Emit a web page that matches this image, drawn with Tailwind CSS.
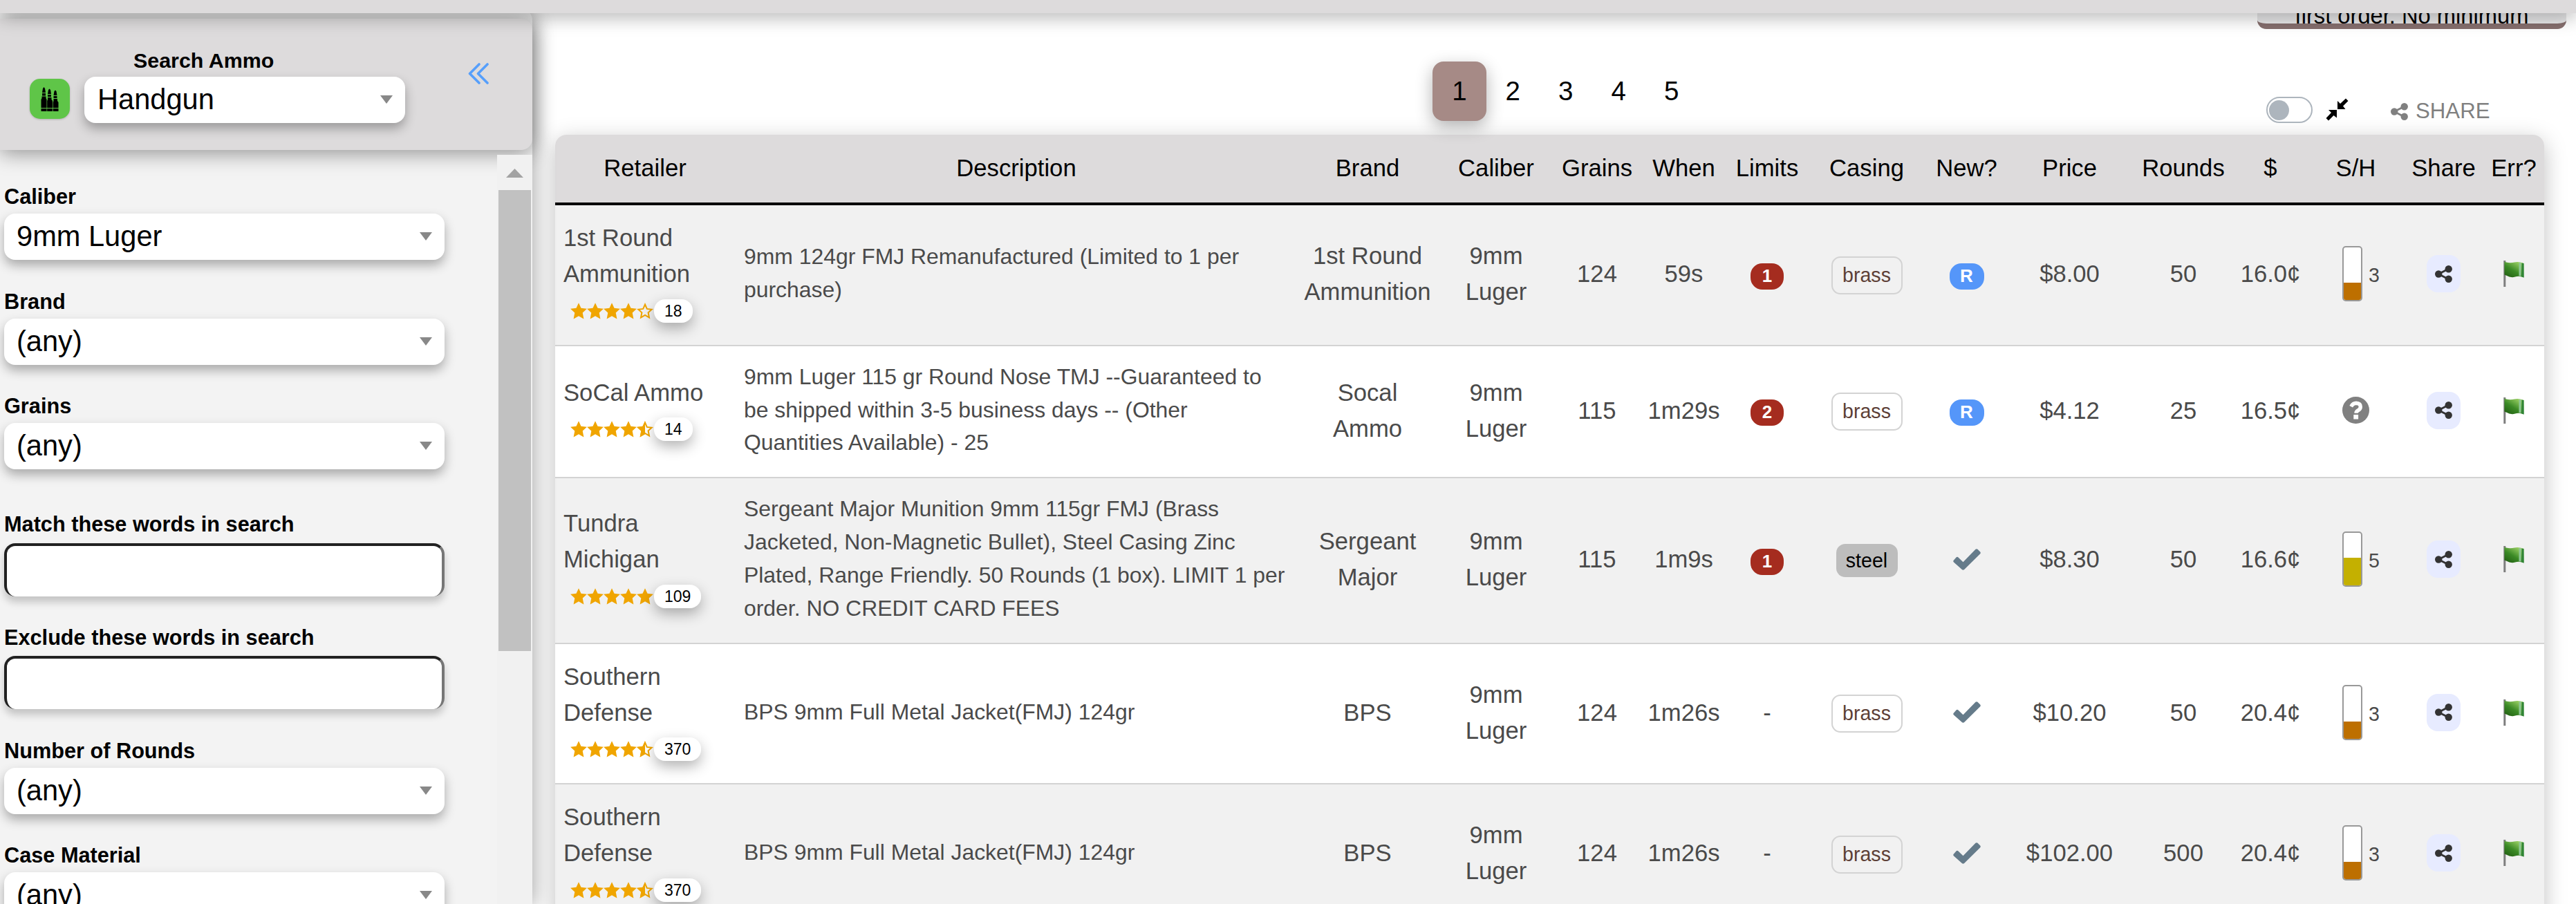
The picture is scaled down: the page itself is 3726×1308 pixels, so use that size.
<!DOCTYPE html>
<html lang="en">
<head>
  <meta charset="UTF-8" />
  <title>Ammo Search</title>
  <script src="https://cdn.jsdelivr.net/npm/@tailwindcss/browser@4"></script>
</head>
<body class="h-[1308px] overflow-hidden bg-white text-black font-['Liberation_Sans',Arial,sans-serif]">
  <!-- Icons -->
  <svg class="absolute w-0 h-0">
    <linearGradient id="flagFill" x1="0" y1="1" x2=".75" y2="0">
      <stop offset="0" stop-color="#1f5a10" />
      <stop offset=".5" stop-color="#3b8a26" />
      <stop offset="1" stop-color="#a0d468" />
    </linearGradient>
    <symbol id="share" viewBox="0 0 25 25">
      <path d="M5 12.500 19.800 5M5 12.500 19.800 20" stroke="currentColor" stroke-width="2.800" fill="none" />
      <circle cx="5.200" cy="12.500" r="5.200" fill="currentColor" />
      <circle cx="19.700" cy="5.200" r="5.200" fill="currentColor" />
      <circle cx="19.700" cy="19.800" r="5.200" fill="currentColor" />
    </symbol>
    <symbol id="star" viewBox="0 0 24 24">
      <path d="M12 .3 15.500 7.800 23.900 8.800 17.700 14.600 19.400 23.500 12 19.300 4.600 23.500 6.300 14.600 .1 8.800 8.500 7.800z" fill="#f0a500" />
    </symbol>
    <symbol id="star-empty" viewBox="0 0 24 24">
      <path d="M12 2.500 14.800 8.900 21.700 9.700 16.600 14.300 18 21.500 12 18 6 21.500 7.400 14.300 2.300 9.700 9.200 8.900z" fill="none" stroke="#f0a500" stroke-width="2" />
    </symbol>
    <symbol id="star-half" viewBox="0 0 24 24">
      <path d="M12 2.500 14.800 8.900 21.700 9.700 16.600 14.300 18 21.500 12 18 6 21.500 7.400 14.300 2.300 9.700 9.200 8.900z" fill="none" stroke="#f0a500" stroke-width="2" />
      <path d="M12 .3V19.300L4.600 23.500 6.300 14.600 .1 8.800 8.500 7.800z" fill="#f0a500" />
    </symbol>
    <symbol id="check" viewBox="0 0 40 31">
      <path d="M1 16.500 4.500 12.500q1.500-1.500 3 0L14.500 19.300 32.500.8q1.500-1.300 3 0L39 4.300q1.500 1.600 0 3.200L16.200 30q-1.700 1.500-3.400 0L1 19.500q-1.500-1.500 0-3z" fill="#657b8a" />
    </symbol>
    <symbol id="question" viewBox="0 0 39 39">
      <circle cx="19.500" cy="19.500" r="19.500" fill="#808080" />
      <path d="M12.700 14.200q2.700-4.900 7.300-4.900 6.300.3 6.300 5.400 0 3-3.600 5.100-2.700 1.500-2.700 3.900" fill="none" stroke="#fff" stroke-width="5.400" />
      <rect x="16.300" y="26" width="6.800" height="6.500" fill="#fff" />
    </symbol>
    <symbol id="flag" viewBox="0 0 30 38">
      <rect x=".3" y="0" width="3" height="38" fill="#7d7d7d" />
      <path d="M1.500 1.500 4 2.500Q10 4 16 2.500T29.500 4V24.500Q23 21.500 17 23.500T4 21.500L1.500 20.500z" fill="url(#flagFill)" />
      <path d="M22.500 3h3v19.500h-3z" fill="#8fc796" />
      <path d="M26.500 3.500 29.500 4v20.500l-3-1z" fill="#2f8438" />
    </symbol>
  </svg>

  <!-- Top bar -->
  <header class="relative z-20 h-[19px] bg-[#dddbdc] shadow-[0_3px_28px_rgba(0,0,0,0.4)]"></header>

  <div class="flex h-[1289px] overflow-hidden">
    <!-- Sidebar -->
    <aside class="relative z-10 w-[770px] shrink-0 -mt-[6px] h-[1295px] rounded-tr-[16px] bg-[#f3f3f3] shadow-[0_4px_32px_rgba(0,0,0,0.4)]">
      <div class="relative mt-[14px] h-[190px] rounded-r-[16px] bg-[#dddbdc] shadow-[0_5px_30px_rgba(0,0,0,0.4)] flex">
        <div class="flex items-center ml-[43px] mt-[87px] size-[58px] rounded-[15px] bg-[#5fc548] justify-center shadow-[0_1px_3px_rgba(0,0,0,0.2)]">
          <svg class="w-[28px] h-[35px]" viewBox="0 0 28 35">
            <path d="M3 8 4 2 5.500 0 7 2 8 8zM3 9H8V12.500H3zM2.500 13.500H8.500V16L9.500 18V30H1.500V18L2.500 16zM1.500 31H9.500V35H1.500zM11 10 12 4 13.500 2.500 15 4 16 10zM11 11H16V14H11zM11 15H16.500V18L18 20V30H10.200V20L11 18zM10.200 31H17.800V35H10.200zM19.500 12 20.500 6 22 4.500 23.500 6 24.500 12zM19.500 13H24.500V16H19.500zM19.500 17H25V20L26.500 22V30H18.700V22L19.500 20zM18.700 31H26.500V35H18.700z" />
          </svg>
        </div>
        <div class="ml-[21px] mt-[43px] w-[464px]">
          <label class="block text-[30.4px] leading-[35px] font-bold pl-[71px]">Search Ammo</label>
          <div class="mt-[6px] h-[67px] rounded-[16px] bg-white pl-[19px] pr-[18px] pb-[2px] flex items-center justify-between text-[41.6px] leading-[48px] shadow-[0_8px_16px_rgba(0,0,0,0.3)]">
            Handgun
            <svg class="w-[18px] h-[12px]" viewBox="0 0 18 12"><path d="M0 0H18L9 12z" fill="#888" /></svg>
          </div>
        </div>
        <svg class="ml-[91px] mt-[64px] w-[31px] h-[31px]" viewBox="0 0 31 31" fill="none" stroke="#569ffb" stroke-width="3.600" stroke-linecap="round" stroke-linejoin="round">
          <path d="M16 2 2.500 15.500 16 29M28 2 14.500 15.500 28 29" />
        </svg>
      </div>

      <div class="flex">
        <div class="w-[719px] pl-[6px] pt-[50px] [&_label]:block [&_label]:text-[30.7px] [&_label]:leading-[35px] [&_label]:font-bold">
          <label>Caliber</label>
          <div class="mt-[7px] mb-[43px] w-[637px] h-[67px] rounded-[16px] bg-white px-[18px] pb-[2px] flex items-center justify-between text-[41.6px] leading-[48px] shadow-[0_8px_16px_rgba(0,0,0,0.3)]">
            9mm Luger
            <svg class="w-[18px] h-[12px]" viewBox="0 0 18 12"><path d="M0 0H18L9 12z" fill="#888" /></svg>
          </div>
          <label>Brand</label>
          <div class="mt-[7px] mb-[42px] w-[637px] h-[67px] rounded-[16px] bg-white px-[18px] pb-[2px] flex items-center justify-between text-[41.6px] leading-[48px] shadow-[0_8px_16px_rgba(0,0,0,0.3)]">
            (any)
            <svg class="w-[18px] h-[12px]" viewBox="0 0 18 12"><path d="M0 0H18L9 12z" fill="#888" /></svg>
          </div>
          <label>Grains</label>
          <div class="mt-[7px] mb-[62px] w-[637px] h-[67px] rounded-[16px] bg-white px-[18px] pb-[2px] flex items-center justify-between text-[41.6px] leading-[48px] shadow-[0_8px_16px_rgba(0,0,0,0.3)]">
            (any)
            <svg class="w-[18px] h-[12px]" viewBox="0 0 18 12"><path d="M0 0H18L9 12z" fill="#888" /></svg>
          </div>
          <label>Match these words in search</label>
          <input type="text" class="block mt-[10px] mb-[42px] w-[637px] h-[77px] rounded-[16px] bg-white border-x-4 border-t-4 border-t-[#212121] border-l-[#212121] border-r-[#767676] shadow-[0_8px_12px_rgba(0,0,0,0.2)]" />
          <label>Exclude these words in search</label>
          <input type="text" class="block mt-[9px] mb-[43px] w-[637px] h-[77px] rounded-[16px] bg-white border-x-4 border-t-4 border-t-[#212121] border-l-[#212121] border-r-[#767676] shadow-[0_8px_12px_rgba(0,0,0,0.2)]" />
          <label>Number of Rounds</label>
          <div class="mt-[7px] mb-[42px] w-[637px] h-[67px] rounded-[16px] bg-white px-[18px] pb-[2px] flex items-center justify-between text-[41.6px] leading-[48px] shadow-[0_8px_16px_rgba(0,0,0,0.3)]">
            (any)
            <svg class="w-[18px] h-[12px]" viewBox="0 0 18 12"><path d="M0 0H18L9 12z" fill="#888" /></svg>
          </div>
          <label>Case Material</label>
          <div class="mt-[7px] w-[637px] h-[67px] rounded-[16px] bg-white px-[18px] pb-[2px] flex items-center justify-between text-[41.6px] leading-[48px] shadow-[0_8px_16px_rgba(0,0,0,0.3)]">
            (any)
            <svg class="w-[18px] h-[12px]" viewBox="0 0 18 12"><path d="M0 0H18L9 12z" fill="#888" /></svg>
          </div>
        </div>
        <!-- Scrollbar -->
        <div class="relative mt-[7px] w-[51px] h-[1084px] bg-[#f1f1f1] flex flex-col items-center">
          <svg class="mt-[20px] w-[25px] h-[13px]" viewBox="0 0 25 13"><path d="M0 13H25L12.500 0z" fill="#a3a3a3" /></svg>
          <div class="mt-[18px] w-[47px] h-[667px] bg-[#c1c1c1]"></div>
        </div>
      </div>
    </aside>

    <!-- Results -->
    <main class="flex-1 pl-[33px]">
      <div class="flex h-[176px] items-start">
        <nav class="flex ml-[1269px] mt-[70px] text-[38.5px] leading-[86px] text-center">
          <a class="w-[78px] h-[86px] rounded-[16px] bg-[#a68a86] shadow-[0_8px_24px_rgba(0,0,0,0.3)]">1</a>
          <a class="w-[76.500px]">2</a>
          <a class="w-[76.500px]">3</a>
          <a class="w-[76.500px]">4</a>
          <a class="w-[76.500px]">5</a>
        </nav>
        <div class="ml-auto mr-[14px] w-[447px]">
          <div class="h-[23px] flex flex-col justify-end items-center rounded-b-[13px] border-b-[8px] border-[#866f6e] bg-[#e9e9ea] text-[32.7px] leading-[22px] whitespace-nowrap">first order. No minimum</div>
          <div class="flex items-center pl-[13px] mt-[98px] h-[38px]">
            <div class="w-[67px] h-[38px] rounded-full border-2 border-[#adb5bd] bg-white pl-[2px] flex items-center">
              <div class="size-[29px] rounded-full bg-[#adb5bd]"></div>
            </div>
            <svg class="ml-[19px] mt-[-1px] w-[33px] h-[33px]" viewBox="0 0 33 33">
              <path d="M17 4 21 8 29 .5 32.500 4 25 11.500 28.500 16H17zM16 17H4L8 21 .5 29 4 32.500 11.500 25 16 28.500z" />
            </svg>
            <svg class="ml-[61px] mt-[5px] size-[25px] text-[#808080]"><use href="#share" /></svg>
            <span class="ml-[11px] mt-[4px] text-[31.200px] leading-[36px] text-[#808080]">SHARE</span>
          </div>
        </div>
      </div>

      <table class="w-[2877px] table-fixed border-separate border-spacing-0 rounded-t-[16px] shadow-[0_8px_32px_rgba(0,0,0,0.25)] text-[34.67px] leading-[52px] text-center text-[#4a4a4a] whitespace-nowrap">
        <colgroup>
          <col class="w-[260px]" /><col class="w-[814px]" /><col class="w-[202px]" /><col class="w-[170px]" />
          <col class="w-[122px]" /><col class="w-[129px]" /><col class="w-[112px]" /><col class="w-[176px]" />
          <col class="w-[113px]" /><col class="w-[185px]" /><col class="w-[144px]" /><col class="w-[108px]" />
          <col class="w-[139px]" /><col class="w-[115px]" /><col class="w-[88px]" />
        </colgroup>
        <thead>
          <tr class="h-[102px] text-black [&>th]:pb-[3px] [&>th]:font-normal [&>th]:bg-[#dddbdc] [&>th]:border-b-4 [&>th]:border-black">
            <th class="rounded-tl-[16px]">Retailer</th>
            <th>Description</th>
            <th>Brand</th>
            <th>Caliber</th>
            <th>Grains</th>
            <th>When</th>
            <th>Limits</th>
            <th>Casing</th>
            <th>New?</th>
            <th>Price</th>
            <th>Rounds</th>
            <th>$</th>
            <th>S/H</th>
            <th>Share</th>
            <th class="rounded-tr-[16px]">Err?</th>
          </tr>
        </thead>
        <tbody id="rows"></tbody>
      </table>
    </main>
  </div>

  <script>
    const rows = [
      { h: 204, retailer: '1st Round<br>Ammunition', stars: 4, votes: 18, desc: '9mm 124gr FMJ Remanufactured (Limited to 1 per<br>purchase)', brand: '1st Round<br>Ammunition', grains: 124, when: '59s', limit: 1, casing: 'brass', isNew: false, price: '$8.00', rounds: 50, cpr: '16.0¢', ship: 3 },
      { h: 191, retailer: 'SoCal Ammo', stars: 4.5, votes: 14, desc: '9mm Luger 115 gr Round Nose TMJ --Guaranteed to<br>be shipped within 3-5 business days -- (Other<br>Quantities Available) - 25', brand: 'Socal<br>Ammo', grains: 115, when: '1m29s', limit: 2, casing: 'brass', isNew: false, price: '$4.12', rounds: 25, cpr: '16.5¢', ship: 0 },
      { h: 240, retailer: 'Tundra<br>Michigan', stars: 5, votes: 109, desc: 'Sergeant Major Munition 9mm 115gr FMJ (Brass<br>Jacketed, Non-Magnetic Bullet), Steel Casing Zinc<br>Plated, Range Friendly. 50 Rounds (1 box). LIMIT 1 per<br>order. NO CREDIT CARD FEES', brand: 'Sergeant<br>Major', grains: 115, when: '1m9s', limit: 1, casing: 'steel', isNew: true, price: '$8.30', rounds: 50, cpr: '16.6¢', ship: 5 },
      { h: 203, retailer: 'Southern<br>Defense', stars: 4.5, votes: 370, desc: 'BPS 9mm Full Metal Jacket(FMJ) 124gr', brand: 'BPS', grains: 124, when: '1m26s', limit: 0, casing: 'brass', isNew: true, price: '$10.20', rounds: 50, cpr: '20.4¢', ship: 3 },
      { h: 204, retailer: 'Southern<br>Defense', stars: 4.5, votes: 370, desc: 'BPS 9mm Full Metal Jacket(FMJ) 124gr', brand: 'BPS', grains: 124, when: '1m26s', limit: 0, casing: 'brass', isNew: true, price: '$102.00', rounds: 500, cpr: '20.4¢', ship: 3 },
    ];

    function starIcons(n) {
      let out = '';
      for (let i = 1; i <= 5; i++) {
        const id = n >= i ? 'star' : n >= i - 0.5 ? 'star-half' : 'star-empty';
        out += `<svg class="size-[24px]"><use href="#${id}" /></svg>`;
      }
      return out;
    }

    function shipping(n) {
      if (!n) return '<svg class="size-[39px] mx-auto"><use href="#question" /></svg>';
      const color = n > 3 ? '#c4b000' : '#bd6f00';
      return `<div class="flex items-center pl-[50px]">
        <div class="w-[29px] h-[80px] rounded-[5px] border-2 border-[#999] bg-white flex flex-col justify-end overflow-hidden">
          <div style="height:${n > 3 ? 40 : 25}px;background:${color}"></div>
        </div>
        <span class="ml-[9px] mt-[4px] text-[28.600px] leading-[36px]">${n}</span>
      </div>`;
    }

    document.getElementById('rows').innerHTML = rows.map((r, i) => `
      <tr class="${i % 2 ? 'bg-white' : 'bg-[#f1f1f1]'} [&>td]:align-middle [&>td]:pb-[4px] [&>td]:border-b-2 [&>td]:border-[#d3d3d3]" style="height:${r.h}px">
        <td class="text-left pl-[12px]">
          ${r.retailer}
          <div class="flex items-center h-[52px] pt-[3px] pl-[10px]">
            ${starIcons(r.stars)}
            <span class="ml-px h-[34px] rounded-[16px] bg-white px-[15px] text-[23px] leading-[35px] text-black shadow-[0_8px_20px_rgba(0,0,0,0.3)]">${r.votes}</span>
          </div>
        </td>
        <td class="text-left pl-[13px] text-[31.9px] leading-[47.8px]">${r.desc}</td>
        <td>${r.brand}</td>
        <td>9mm<br>Luger</td>
        <td>${r.grains}</td>
        <td>${r.when}</td>
        <td>${r.limit ? `<div class="mx-auto mt-[7px] w-[48px] h-[38px] rounded-[17px] bg-[#a52c1f] text-white font-bold text-[26px] leading-[37px]">${r.limit}</div>` : '-'}</td>
        <td>${r.casing === 'brass'
          ? '<div class="mx-auto mt-[4px] w-[103px] h-[55px] rounded-[13px] border-2 border-[#d3d3d3] text-[#5d4037] text-[28.600px] leading-[51px]">brass</div>'
          : '<div class="mx-auto mt-[4px] w-[89px] h-[48px] rounded-[13px] bg-[#bdbdbd] text-black text-[28.600px] leading-[48px]">steel</div>'}</td>
        <td>${r.isNew
          ? '<svg class="mx-auto w-[40px] h-[31px]"><use href="#check" /></svg>'
          : '<div class="mx-auto mt-[7px] w-[50px] h-[38px] rounded-[17px] bg-[#5596f9] text-white font-bold text-[26px] leading-[36px]">R</div>'}</td>
        <td>${r.price}</td>
        <td>${r.rounds}</td>
        <td>${r.cpr}</td>
        <td>${shipping(r.ship)}</td>
        <td>
          <div class="mx-auto w-[49px] h-[54px] rounded-[16px] bg-[#e7ebff] flex items-center justify-center">
            <svg class="size-[25px] text-[#333]"><use href="#share" /></svg>
          </div>
        </td>
        <td><svg class="mx-auto w-[30px] h-[38px]"><use href="#flag" /></svg></td>
      </tr>`).join('');
  </script>
</body>
</html>
